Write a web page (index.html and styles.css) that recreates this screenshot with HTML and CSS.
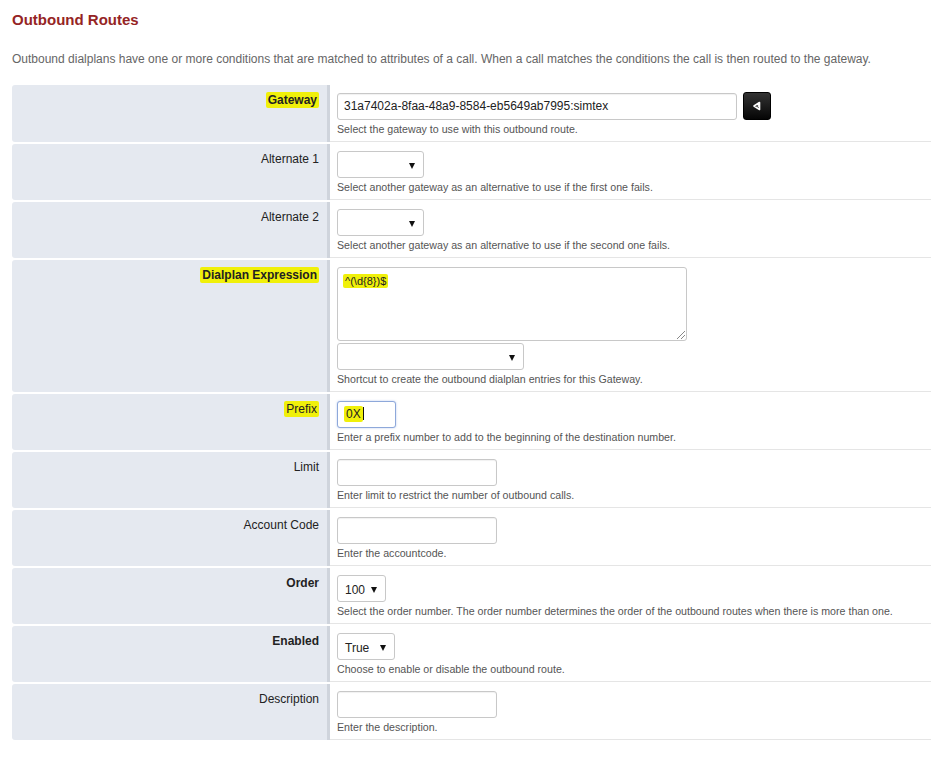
FILE: index.html
```html
<!DOCTYPE html>
<html>
<head>
<meta charset="utf-8">
<link rel="stylesheet" href="styles.css">
</head>
<body>
<div class="page">
  <h1 class="title">Outbound Routes</h1>
  <p class="intro">Outbound dialplans have one or more conditions that are matched to attributes of a call. When a call matches the conditions the call is then routed to the gateway.</p>

  <div class="form">
    <div class="label bold"><span class="hl">Gateway</span></div>
    <div class="field">
      <div class="line">
        <div class="input wide">31a7402a-8faa-48a9-8584-eb5649ab7995:simtex</div>
        <button class="btn" type="button">
          <svg width="10" height="10" viewBox="0 0 10 10"><path d="M7.5 1.5 L2 5 L7.5 8.5 Z" fill="none" stroke="#fff" stroke-width="1.6" stroke-linejoin="round"/><path d="M5 5 L7 3.8 L7 6.2 Z" fill="#fff"/></svg>
        </button>
      </div>
      <div class="help">Select the gateway to use with this outbound route.</div>
    </div>

    <div class="label">Alternate 1</div>
    <div class="field">
      <div class="select w86"><span></span></div>
      <div class="help">Select another gateway as an alternative to use if the first one fails.</div>
    </div>

    <div class="label">Alternate 2</div>
    <div class="field">
      <div class="select w86"><span></span></div>
      <div class="help">Select another gateway as an alternative to use if the second one fails.</div>
    </div>

    <div class="label bold"><span class="hl">Dialplan Expression</span></div>
    <div class="field">
      <div class="textarea"><span class="hl small">^(\d{8})$</span></div>
      <div class="select w186"><span></span></div>
      <div class="help">Shortcut to create the outbound dialplan entries for this Gateway.</div>
    </div>

    <div class="label"><span class="hl">Prefix</span></div>
    <div class="field">
      <div class="input prefix focus"><span class="hl">0X</span><i class="caret"></i></div>
      <div class="help">Enter a prefix number to add to the beginning of the destination number.</div>
    </div>

    <div class="label">Limit</div>
    <div class="field">
      <div class="input w160"></div>
      <div class="help">Enter limit to restrict the number of outbound calls.</div>
    </div>

    <div class="label">Account Code</div>
    <div class="field">
      <div class="input w160"></div>
      <div class="help">Enter the accountcode.</div>
    </div>

    <div class="label bold">Order</div>
    <div class="field">
      <div class="select w48"><span>100</span></div>
      <div class="help">Select the order number. The order number determines the order of the outbound routes when there is more than one.</div>
    </div>

    <div class="label bold">Enabled</div>
    <div class="field">
      <div class="select w57"><span>True</span></div>
      <div class="help">Choose to enable or disable the outbound route.</div>
    </div>

    <div class="label">Description</div>
    <div class="field">
      <div class="input w160"></div>
      <div class="help">Enter the description.</div>
    </div>
  </div>
</div>
</body>
</html>
```

FILE: styles.css
```css
html, body {
  margin: 0;
  padding: 0;
  background: #fff;
  font-family: "Liberation Sans", Arial, sans-serif;
  color: #222;
}
.page {
  padding: 11px 0 0 12px;
}
.title {
  margin: 0;
  font-size: 15px;
  line-height: 18px;
  font-weight: bold;
  color: #952424;
}
.intro {
  margin: 23px 0 0 0;
  font-size: 12px;
  line-height: 14px;
  color: #666;
}
.form {
  margin-top: 19px;
  display: grid;
  grid-template-columns: 318px 1fr;
  row-gap: 2px;
}
.label {
  background: #e5e9f0;
  border-right: 3px solid #cfd4dc;
  border-radius: 3px 0 0 3px;
  text-align: right;
  padding: 8px 8px 0 0;
  font-size: 12px;
  line-height: 14px;
  color: #222;
}
.label.bold {
  font-weight: bold;
}
.hl {
  background: #f0f00a;
  padding: 1px 2px;
  border-radius: 2px;
}
.field {
  padding: 7px 0 5px 7px;
  border-bottom: 1px solid #e5e5e5;
}
.line {
  display: flex;
  align-items: center;
  gap: 6px;
}
.input {
  box-sizing: border-box;
  height: 27px;
  border: 1px solid #c8c8c8;
  border-radius: 3px;
  background: #fff;
  font-size: 12px;
  line-height: 25px;
  padding: 0 6px;
  color: #222;
  box-shadow: inset 0 1px 1px rgba(0,0,0,0.06);
}
.input.wide {
  width: 400px;
}
.input.w160 {
  width: 160px;
}
.input.prefix {
  width: 59px;
  padding: 0 6px;
}
.input.focus {
  border-color: #8ea8da;
  box-shadow: 0 0 2px rgba(102, 140, 220, 0.5);
}
.caret {
  display: inline-block;
  width: 1px;
  height: 13px;
  background: #111;
  vertical-align: -2px;
}
.btn {
  width: 28px;
  height: 28px;
  border: 1px solid #000;
  border-radius: 3px;
  background: linear-gradient(#333, #050505);
  padding: 0;
  display: flex;
  align-items: center;
  justify-content: center;
}
.select {
  box-sizing: border-box;
  position: relative;
  height: 27px;
  border: 1px solid #c8c8c8;
  border-radius: 3px;
  background: #fff;
  font-size: 12px;
  line-height: 25px;
  padding: 2px 0 0 7px;
  color: #222;
}
.select::after {
  content: "";
  position: absolute;
  right: 8px;
  top: 11px;
  border-left: 3px solid transparent;
  border-right: 3px solid transparent;
  border-top: 6px solid #111;
}
.select.w86 { width: 87px; }
.select.w186 { width: 187px; }
.select.w48 { width: 49px; }
.select.w57 { width: 58px; }
.textarea {
  box-sizing: border-box;
  position: relative;
  width: 350px;
  height: 74px;
  border: 1px solid #c8c8c8;
  border-radius: 3px;
  background: #fff;
  padding: 6px 5px;
  font-size: 12px;
  line-height: 14px;
  margin-bottom: 2px;
}
.hl.small {
  font-size: 11px;
}
.textarea::after {
  content: "";
  position: absolute;
  right: 1px;
  bottom: 1px;
  width: 8px;
  height: 8px;
  background: linear-gradient(135deg, transparent 45%, #888 45%, #888 52%, transparent 52%, transparent 70%, #888 70%, #888 77%, transparent 77%);
}
.help {
  margin-top: 2px;
  font-size: 10.65px;
  line-height: 14px;
  color: #555;
}
```
